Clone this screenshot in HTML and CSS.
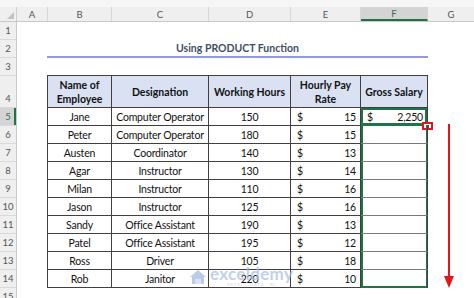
FILE: index.html
```html
<!DOCTYPE html>
<html lang="en">
<head>
  <meta charset="UTF-8">
  <meta name="viewport" content="width=device-width, initial-scale=1.0">
  <title>Using PRODUCT Function</title>
  <link rel="stylesheet" href="styles.css">
</head>
<body>
  <div class="ribbon-edge"></div>

  <!-- Column letters -->
  <div class="col-bar">
    <div class="corner"><span class="corner-tri"></span></div>
    <div class="col-head w-a">A</div>
    <div class="col-head w-b">B</div>
    <div class="col-head w-c">C</div>
    <div class="col-head w-d">D</div>
    <div class="col-head w-e">E</div>
    <div class="col-head w-f col-active">F</div>
    <div class="col-head w-g">G</div>
  </div>

  <div class="sheet">
    <!-- Row numbers -->
    <div class="row-nums">
      <div class="row-num">1</div>
      <div class="row-num">2</div>
      <div class="row-num">3</div>
      <div class="row-num tall">4</div>
      <div class="row-num row-active">5</div>
      <div class="row-num">6</div>
      <div class="row-num">7</div>
      <div class="row-num">8</div>
      <div class="row-num">9</div>
      <div class="row-num">10</div>
      <div class="row-num">11</div>
      <div class="row-num">12</div>
      <div class="row-num">13</div>
      <div class="row-num">14</div>
      <div class="row-num">15</div>
    </div>

    <div class="cells">
      <div class="blank-row"></div>
      <div class="title-row">
        <div class="title">Using PRODUCT Function</div>
      </div>
      <div class="blank-row short"></div>

      <div class="main">
        <div class="col-a"></div>

        <div class="data-table">
          <div class="th">Name of<br>Employee</div>
          <div class="th">Designation</div>
          <div class="th">Working Hours</div>
          <div class="th">Hourly Pay<br>Rate</div>
          <div class="th">Gross Salary</div>

          <div class="td">Jane</div>
          <div class="td">Computer Operator</div>
          <div class="td">150</div>
          <div class="td money"><span>$</span><span>15</span></div>
          <div class="td money sel active"><span>$</span><span>2,250</span><i class="fill-handle"></i></div>

          <div class="td">Peter</div>
          <div class="td">Computer Operator</div>
          <div class="td">180</div>
          <div class="td money"><span>$</span><span>15</span></div>
          <div class="td sel"></div>

          <div class="td">Austen</div>
          <div class="td">Coordinator</div>
          <div class="td">140</div>
          <div class="td money"><span>$</span><span>13</span></div>
          <div class="td sel"></div>

          <div class="td">Agar</div>
          <div class="td">Instructor</div>
          <div class="td">130</div>
          <div class="td money"><span>$</span><span>14</span></div>
          <div class="td sel"></div>

          <div class="td">Milan</div>
          <div class="td">Instructor</div>
          <div class="td">110</div>
          <div class="td money"><span>$</span><span>16</span></div>
          <div class="td sel"></div>

          <div class="td">Jason</div>
          <div class="td">Instructor</div>
          <div class="td">125</div>
          <div class="td money"><span>$</span><span>16</span></div>
          <div class="td sel"></div>

          <div class="td">Sandy</div>
          <div class="td">Office Assistant</div>
          <div class="td">190</div>
          <div class="td money"><span>$</span><span>13</span></div>
          <div class="td sel"></div>

          <div class="td">Patel</div>
          <div class="td">Office Assistant</div>
          <div class="td">195</div>
          <div class="td money"><span>$</span><span>12</span></div>
          <div class="td sel"></div>

          <div class="td">Ross</div>
          <div class="td">Driver</div>
          <div class="td">105</div>
          <div class="td money"><span>$</span><span>18</span></div>
          <div class="td sel"></div>

          <div class="td">Rob</div>
          <div class="td">Janitor</div>
          <div class="td">220</div>
          <div class="td money"><span>$</span><span>10</span></div>
          <div class="td sel last"></div>

          <!-- watermark over the table -->
          <div class="watermark">
            <svg class="wm-icon" width="18" height="16" viewBox="0 0 18 16">
              <path d="M9 1 L17 8 L15 8 L15 15 L3 15 L3 8 L1 8 Z" fill="#9fb6e0"/>
              <path d="M6 10 L12 10 L12 15 L6 15 Z" fill="#c9d7ef"/>
            </svg>
            <div class="wm-text">
              <div class="wm-name">exceldemy</div>
              <div class="wm-sub">EXCEL · DATA · BI</div>
            </div>
          </div>
        </div>

        <div class="col-g">
          <div class="arrow-gap"></div>
          <svg class="arrow" width="46" height="180" viewBox="0 0 46 180">
            <line x1="21" y1="16" x2="21" y2="170" stroke="#e8131b" stroke-width="2"/>
            <polygon points="16,168 26,168 21,180" fill="#e8131b"/>
          </svg>
        </div>
      </div>
    </div>
  </div>
</body>
</html>
```

FILE: styles.css
```css
body {
  font-family: "Lato", "Open Sans", sans-serif;
  margin: 0;
  padding: 0;
  background-color: #ffffff;
  color: #111;
  width: 474px;
  height: 298px;
  overflow: hidden;
}

.ribbon-edge {
  height: 7px;
  background-color: #f6f6f6;
}

/* column letters */
.col-bar {
  display: flex;
  height: 15px;
  background-color: #efefef;
  border-bottom: 1px solid #c9c9c9;
  box-sizing: border-box;
}

.corner {
  width: 17px;
  border-right: 1px solid #d0d0d0;
  box-sizing: border-box;
  display: flex;
  align-items: flex-end;
  justify-content: flex-end;
  padding: 2px;
}

.corner-tri {
  width: 0;
  height: 0;
  border-left: 7px solid transparent;
  border-bottom: 7px solid #c2c2c2;
}

.col-head {
  box-sizing: border-box;
  border-right: 1px solid #d6d6d6;
  font-size: 9.5px;
  color: #555;
  display: flex;
  align-items: center;
  justify-content: center;
}

.w-a { width: 31px; }
.w-b { width: 64px; }
.w-c { width: 97px; }
.w-d { width: 82px; }
.w-e { width: 70px; }
.w-f { width: 67px; }
.w-g { flex: 1; border-right: none; }

.col-active {
  background-color: #d4d4d4;
  border-bottom: 2px solid #217346;
  color: #3c6e50;
}

/* sheet body */
.sheet {
  display: flex;
}

.row-nums {
  width: 17px;
  display: flex;
  flex-direction: column;
  background-color: #efefef;
  border-right: 1px solid #c9c9c9;
  box-sizing: border-box;
}

.row-num {
  height: 18px;
  box-sizing: border-box;
  border-bottom: 1px solid #dadada;
  font-size: 9.5px;
  color: #555;
  display: flex;
  align-items: flex-end;
  justify-content: center;
  padding-bottom: 3px;
}

.row-num.tall {
  height: 32px;
}

.row-active {
  background-color: #d4d4d4;
  color: #3c6e50;
  box-shadow: inset -2px 0 0 #217346;
}

.cells {
  flex: 1;
  display: flex;
  flex-direction: column;
}

.blank-row {
  height: 18px;
}

.blank-row.short {
  height: 17px;
}

.title-row {
  height: 18px;
  padding-left: 30px;
}

.title {
  width: 381px;
  height: 18px;
  box-sizing: border-box;
  border-bottom: 2px solid #8f9be0;
  text-align: center;
  font-weight: 700;
  font-size: 10.5px;
  line-height: 17px;
  color: #3f4e66;
}

.main {
  display: flex;
}

.col-a {
  width: 30px;
}

.data-table {
  position: relative;
  display: grid;
  grid-template-columns: 64px 97px 82px 70px 67px;
  grid-template-rows: 32px repeat(10, 18px);
  border-left: 1px solid #404040;
  border-top: 1px solid #404040;
  font-size: 10.5px;
}

.th,
.td {
  box-sizing: border-box;
  border-right: 1px solid #404040;
  border-bottom: 1px solid #404040;
  display: flex;
  align-items: center;
  justify-content: center;
  text-align: center;
}

.td {
  letter-spacing: -0.2px;
}

.th {
  background-color: #d9e1f2;
  font-weight: 700;
  line-height: 14px;
}

.td.money {
  justify-content: space-between;
  padding: 0 4px 0 6px;
}

.td.sel {
  position: relative;
  box-shadow: inset 2px 0 0 #217346, inset -1px 0 0 #217346;
  border-bottom-color: #7a7a7a;
}

.td.sel.active {
  box-shadow: inset 0 0 0 2px #217346;
  border-bottom-color: #217346;
}

.td.sel.last {
  box-shadow: inset 2px 0 0 #217346, inset -1px 0 0 #217346, inset 0 -1px 0 #217346;
  border-bottom-color: #217346;
}

.fill-handle {
  position: absolute;
  right: -6px;
  bottom: -5px;
  width: 11px;
  height: 8px;
  box-sizing: border-box;
  border: 2px solid #e8131b;
  background-color: #ffffff;
  display: flex;
  align-items: center;
  justify-content: center;
}

.fill-handle::after {
  content: "";
  width: 3px;
  height: 3px;
  background-color: #217346;
}

.watermark {
  position: absolute;
  left: 141px;
  top: 190px;
  display: flex;
  align-items: center;
  gap: 3px;
  opacity: 0.7;
}

.wm-text {
  display: flex;
  flex-direction: column;
  align-items: center;
}

.wm-name {
  font-size: 17px;
  font-weight: 700;
  color: #a9bde3;
  line-height: 16px;
  letter-spacing: 0.3px;
}

.wm-sub {
  font-size: 4px;
  color: #b7c3d8;
  letter-spacing: 1px;
}

.col-g {
  flex: 1;
  display: flex;
  flex-direction: column;
}

.arrow-gap {
  height: 33px;
}
```
